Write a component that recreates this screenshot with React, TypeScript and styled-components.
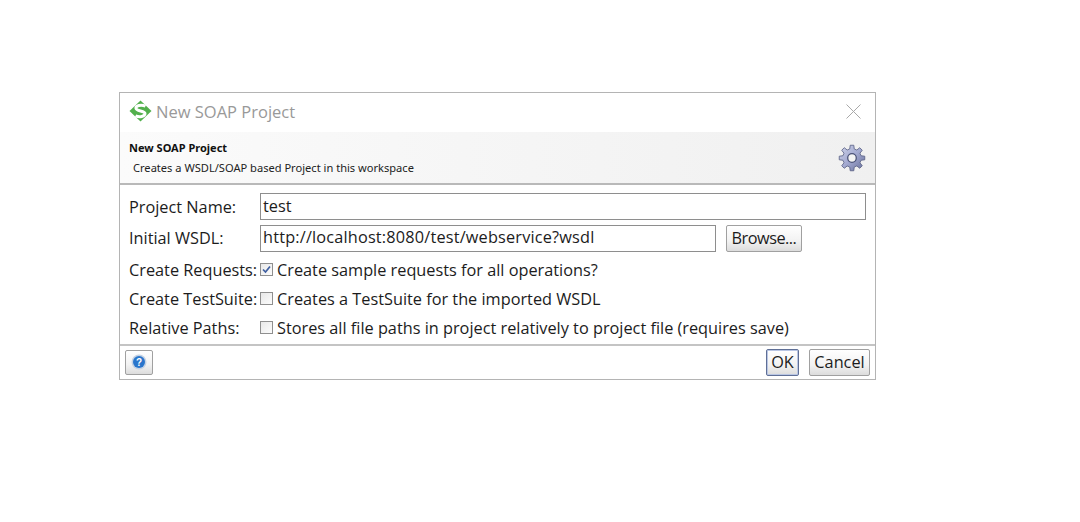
import styled, { createGlobalStyle } from 'styled-components';

const GlobalStyle = createGlobalStyle`
  html, body {
    margin: 0;
    padding: 0;
    background: #fff;
    font-family: "Open Sans", "Noto Sans", sans-serif;
  }
`;

const Dialog = styled.div`
  box-sizing: border-box;
  width: 757px;
  height: 288px;
  margin: 92px 0 0 119px;
  border: 1px solid #b4b4b4;
  display: flex;
  flex-direction: column;
  background: #fff;
`;

const TitleBar = styled.div`
  box-sizing: border-box;
  height: 39px;
  display: flex;
  align-items: center;
  padding: 0 14px 3px 9px;
  gap: 4px;
`;

const TitleText = styled.span`
  flex: 1;
  font-size: 16.5px;
  color: #999;
`;

const Banner = styled.div`
  box-sizing: border-box;
  height: 53px;
  display: flex;
  align-items: center;
  justify-content: space-between;
  padding: 0 9px;
  background: linear-gradient(90deg, #fbfbfb 0%, #f0f0f0 100%);
  border-bottom: 2px solid #b9b9b9;
`;

const BannerTitle = styled.div`
  font-family: "Noto Sans", sans-serif;
  font-size: 11px;
  font-weight: 700;
  line-height: 15px;
  color: #111;
`;

const BannerText = styled.div`
  font-family: "Noto Sans", sans-serif;
  font-size: 11.1px;
  line-height: 15px;
  margin: 5px 0 0 4px;
  color: #222;
`;

const Form = styled.div`
  flex: 1;
  display: flex;
  flex-direction: column;
  padding: 7px 9px 0;
`;

const Row = styled.div<{ $h: number }>`
  height: ${(p) => p.$h}px;
  display: flex;
  align-items: center;
`;

const Label = styled.span`
  width: 131px;
  flex: none;
  font-size: 16.3px;
  color: #1c1c1c;
  white-space: nowrap;
`;

const Field = styled.div<{ $w: number; $track?: number }>`
  box-sizing: border-box;
  width: ${(p) => p.$w}px;
  height: 27px;
  flex: none;
  display: flex;
  align-items: center;
  padding: 0 0 2px 2px;
  border: 1px solid #8e8e8e;
  font-size: 16.3px;
  letter-spacing: ${(p) => p.$track ?? 0}px;
  color: #1c1c1c;
  white-space: nowrap;
`;

const Box = styled.span`
  box-sizing: border-box;
  width: 13px;
  height: 13px;
  flex: none;
  margin-right: 4px;
  border: 1px solid #8f8f8f;
  background: linear-gradient(135deg, #e8e8e8, #fcfcfc);
  display: flex;
  align-items: center;
  justify-content: center;
`;

const CheckText = styled.span`
  font-size: 16.3px;
  color: #1c1c1c;
  white-space: nowrap;
`;

const Button = styled.button<{ $w: number; $h?: number; $default?: boolean }>`
  box-sizing: border-box;
  width: ${(p) => p.$w}px;
  height: ${(p) => p.$h ?? 27}px;
  padding: 0;
  display: flex;
  align-items: center;
  justify-content: center;
  font-family: inherit;
  font-size: 16.3px;
  color: #1c1c1c;
  border: 1px solid ${(p) => (p.$default ? '#5f6f96' : '#a0a0a0')};
  border-radius: 2px;
  box-shadow: ${(p) => (p.$default ? 'inset 0 0 0 1px #b9c6e4' : 'none')};
  background: linear-gradient(180deg, #ffffff 0%, #f2f2f2 60%, #dcdcdc 100%);
`;

const BrowseButton = styled(Button)`
  margin-left: 10px;
  letter-spacing: -0.5px;
`;

const Footer = styled.div`
  box-sizing: border-box;
  height: 35px;
  display: flex;
  align-items: center;
  padding: 0 5px 1px 5px;
  gap: 10px;
  border-top: 2px solid #c4c4c4;
`;

const Spacer = styled.div`
  flex: 1;
`;

function SoapLogo() {
  return (
    <svg width="23" height="22" viewBox="0 0 23 22">
      <path d="M11.5 0.5 L22.5 11 L11.5 21.5 L0.5 11 Z" fill="#52b04c" />
      <path
        d="M16.5 6.2 C12 4.2 6.5 5.6 7 8.6 C7.5 11.4 16 10.6 16 13.6 C16 16.6 10.5 17.6 6.5 15.8"
        stroke="#fff"
        strokeWidth="3"
        fill="none"
      />
    </svg>
  );
}

function CloseIcon() {
  return (
    <svg width="15" height="15" viewBox="0 0 15 15">
      <path d="M0.5 0.5 L14.5 14.5 M14.5 0.5 L0.5 14.5" stroke="#a8a8a8" strokeWidth="1" fill="none" />
    </svg>
  );
}

// eight trapezoid teeth round a 15,15 centre
function gearOutline() {
  const points: string[] = [];
  const pt = (deg: number, r: number) => {
    const a = (deg * Math.PI) / 180;
    return `${(15 + r * Math.cos(a)).toFixed(2)},${(15 + r * Math.sin(a)).toFixed(2)}`;
  };
  for (let i = 0; i < 8; i += 1) {
    const c = i * 45 - 90;
    points.push(pt(c - 14, 10), pt(c - 8, 13.8), pt(c + 8, 13.8), pt(c + 14, 10));
  }
  return points.join(' ');
}

function GearIcon() {
  return (
    <svg width="28" height="28" viewBox="0 0 30 30">
      <defs>
        <linearGradient id="gear" x1="0" y1="0" x2="1" y2="1">
          <stop offset="0" stopColor="#cfd4ea" />
          <stop offset="0.5" stopColor="#a3a9d0" />
          <stop offset="1" stopColor="#656d99" />
        </linearGradient>
      </defs>
      <polygon points={gearOutline()} fill="url(#gear)" stroke="#5a6285" strokeWidth="0.9" />
      <circle cx="15" cy="15" r="4.6" fill="#f4f4f4" stroke="#4c5478" strokeWidth="1.4" />
    </svg>
  );
}

function HelpIcon() {
  return (
    <svg width="16" height="16" viewBox="0 0 16 16">
      <circle cx="8" cy="8" r="7.5" fill="#c4d2e4" />
      <circle cx="8" cy="8" r="6" fill="#2a76cc" />
      <text x="8" y="11.5" textAnchor="middle" fontSize="10" fontWeight="700" fontFamily="Liberation Sans, sans-serif" fill="#fff">?</text>
    </svg>
  );
}

function Check() {
  return (
    <svg width="11" height="11" viewBox="0 0 11 11">
      <path d="M2 5.5 L4.5 8 L9 2.5" stroke="#3f5fa0" strokeWidth="1.7" fill="none" />
    </svg>
  );
}

export default function App() {
  return (
    <>
      <GlobalStyle />
      <Dialog>
        <TitleBar>
          <SoapLogo />
          <TitleText>New SOAP Project</TitleText>
          <CloseIcon />
        </TitleBar>
        <Banner>
          <div>
            <BannerTitle>New SOAP Project</BannerTitle>
            <BannerText>Creates a WSDL/SOAP based Project in this workspace</BannerText>
          </div>
          <GearIcon />
        </Banner>
        <Form>
          <Row $h={29}>
            <Label>Project Name:</Label>
            <Field $w={606}>test</Field>
          </Row>
          <Row $h={34}>
            <Label>Initial WSDL:</Label>
            <Field $w={456} $track={0.18}>http://localhost:8080/test/webservice?wsdl</Field>
            <BrowseButton type="button" $w={76}>Browse...</BrowseButton>
          </Row>
          <Row $h={29}>
            <Label>Create Requests:</Label>
            <Box><Check /></Box>
            <CheckText>Create sample requests for all operations?</CheckText>
          </Row>
          <Row $h={29}>
            <Label>Create TestSuite:</Label>
            <Box />
            <CheckText>Creates a TestSuite for the imported WSDL</CheckText>
          </Row>
          <Row $h={29}>
            <Label>Relative Paths:</Label>
            <Box />
            <CheckText>Stores all file paths in project relatively to project file (requires save)</CheckText>
          </Row>
        </Form>
        <Footer>
          <Button type="button" $w={28} $h={25} aria-label="Help"><HelpIcon /></Button>
          <Spacer />
          <Button type="button" $w={33} $default>OK</Button>
          <Button type="button" $w={61}>Cancel</Button>
        </Footer>
      </Dialog>
    </>
  );
}
